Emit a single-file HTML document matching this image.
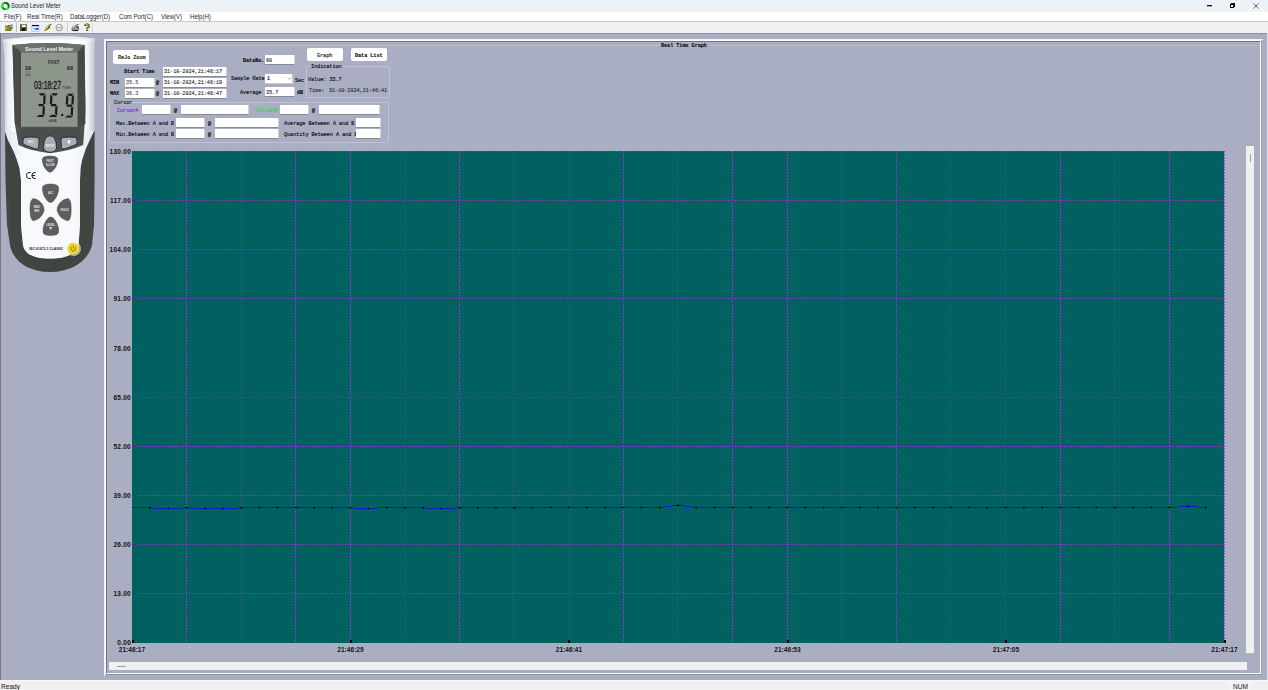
<!DOCTYPE html>
<html><head><meta charset="utf-8">
<style>
*{box-sizing:border-box}
html,body{margin:0;padding:0}
body{width:1268px;height:690px;overflow:hidden;position:relative;background:#aaaec3;font-family:"Liberation Sans",sans-serif;color:#000}
.a{position:absolute}
#title{left:0;top:0;width:1268px;height:12px;background:#ebf2f8}
#title .t{left:11px;top:2px;font-size:6.6px;line-height:8px;color:#262626;transform-origin:0 0;transform:scaleX(.9)}
#menu{left:0;top:12px;width:1268px;height:9px;background:#fff}
#menu span{position:absolute;top:-0.5px;font-size:6.9px;line-height:9px;color:#1c1c2c;transform-origin:0 0;transform:scaleX(.88)}
#tbline{left:0;top:21px;width:1268px;height:1px;background:#c8c8c8}
#toolbar{left:0;top:22px;width:1268px;height:11px;background:#f0f0f0}
#mdiTop{left:0;top:33px;width:1268px;height:1px;background:#8e92a4}
#mdiLeft{left:0;top:33px;width:1px;height:647px;background:#78797e}
#status{left:0;top:680px;width:1268px;height:10px;background:#f0f0f0;border-top:1px solid #f8f8f8}
.ui{font-family:"Liberation Mono",monospace;font-size:6px;line-height:7px;color:#0a0a0a;white-space:nowrap;transform-origin:0 0;transform:scaleX(.85);-webkit-text-stroke:0.15px currentColor}
.box{position:absolute;background:#fff;border-bottom:1px solid #888a98;border-right:1px solid #d0d2dc}
.btn{position:absolute;background:#fff;border-radius:2px}
.grp{position:absolute;border:1px solid #c0c4d3;border-radius:1.5px}
.yl{position:absolute;left:100px;width:31px;text-align:right;font-family:"Liberation Sans",sans-serif;font-weight:bold;font-size:6.5px;line-height:8px;color:#111;letter-spacing:.25px}
.xl{position:absolute;top:645.5px;width:31px;text-align:center;font-family:"Liberation Sans",sans-serif;font-weight:bold;font-size:6.5px;line-height:8px;color:#111;letter-spacing:.05px}
</style></head><body>
<!-- title bar -->
<div id="title" class="a">
  <svg class="a" style="left:1px;top:2px" width="9" height="8" viewBox="0 0 9 8"><circle cx="4.5" cy="4" r="3.3" fill="none" stroke="#1a7a2a" stroke-width="2"/><path d="M1.6 5.6 A3.3 3.3 0 0 1 3 1" fill="none" stroke="#2cf02c" stroke-width="2"/><path d="M4.5 7.3 A3.3 3.3 0 0 0 7.3 5.8" fill="none" stroke="#30ff30" stroke-width="2"/><path d="M5 1 L7.6 3.2" stroke="#0a5a1a" stroke-width="1.2"/><circle cx="4.6" cy="4" r="1.2" fill="#f4faf4"/></svg>
  <div class="a t">Sound Level Meter</div>
  <div class="a" style="left:1207px;top:5px;width:5px;height:1px;background:#111;box-shadow:0 0.5px 0 #555"></div>
  <div class="a" style="left:1230px;top:4px;width:4px;height:4px;border:1px solid #111"></div>
  <div class="a" style="left:1231px;top:3px;width:4px;height:4px;border-top:1px solid #111;border-right:1px solid #111"></div>
  <svg class="a" style="left:1253px;top:3px" width="6" height="6"><path d="M0.3 0.3 L5.7 5.7 M5.7 0.3 L0.3 5.7" stroke="#606060" stroke-width="0.9"/></svg>
</div>
<!-- menu -->
<div id="menu" class="a">
  <span style="left:4px">File(F)</span>
  <span style="left:27px">Real Time(R)</span>
  <span style="left:70px">DataLogger(D)</span>
  <span style="left:119px">Com Port(C)</span>
  <span style="left:161px">View(V)</span>
  <span style="left:190px">Help(H)</span>
</div>
<div id="tbline" class="a"></div>
<div id="toolbar" class="a"><svg class="a" style="left:0;top:0" width="100" height="11" viewBox="0 22 100 11">
<rect x="2" y="22" width="1" height="11" fill="#ffffff"/>
<!-- open folder -->
<path d="M5.5 26 L7.5 26 L8 25.5 L10 25.5 L10 27 L12.5 27 L11 30.5 L5.5 30.5 Z" fill="#8a8a10" stroke="#333" stroke-width="0.5"/>
<path d="M5.5 26.5 L7 28 L5.5 29.5 Z" fill="#f0f070"/>
<path d="M10.5 25 Q12.5 24.5 12.8 26" fill="none" stroke="#222" stroke-width="0.8"/>
<rect x="16" y="23" width="1" height="9" fill="#b8b8b8"/>
<rect x="17" y="23" width="0.5" height="9" fill="#fff"/>
<!-- save -->
<rect x="20.2" y="24.4" width="6.6" height="6.6" fill="#111"/>
<rect x="20.6" y="24.8" width="1" height="5.6" fill="#9a9a10"/>
<rect x="26" y="24.8" width="0.6" height="5.6" fill="#9a9a10"/>
<rect x="22" y="24.8" width="3.8" height="2.6" fill="#f4f4f4"/>
<rect x="25.2" y="29.6" width="0.8" height="0.8" fill="#fff"/>
<!-- window -->
<rect x="31.8" y="25" width="7.2" height="6.4" fill="#e8ecf4" stroke="#a8a8e0" stroke-width="0.5"/>
<rect x="32" y="25" width="7" height="1.2" fill="#000090"/>
<rect x="33.5" y="28" width="4" height="1.8" fill="#20e0e0"/>
<rect x="36" y="28" width="2.5" height="1.8" fill="#2040f0"/>
<!-- lightning -->
<path d="M49.5 24.2 L51 24.4 L48.6 27.2 L49.8 27.4 L45.5 30.2 L44.2 30.9 L46.6 28.2 L45.6 28 Z" fill="#f2f20c" stroke="#1a1a1a" stroke-width="0.35"/>
<path d="M51 24.4 L48.6 27.2 L49.8 27.4 L46 30" fill="none" stroke="#111" stroke-width="0.7"/>
<!-- circle -->
<circle cx="59.2" cy="27.6" r="3.1" fill="none" stroke="#a6a6a6" stroke-width="1.2"/>
<rect x="57" y="27.1" width="4.4" height="1.1" fill="#a6a6a6"/>
<rect x="67" y="23" width="1" height="9" fill="#cfcfcf"/>
<rect x="68" y="23" width="0.5" height="9" fill="#fff"/>
<!-- printer -->
<path d="M71.5 28 L73 25.2 L76.5 24.6 L78.6 26.5 L79 29.5 L77.6 30.8 L72 30.6 Z" fill="#9a9a9a"/>
<path d="M73.2 25.6 L74.6 25.2 L74.2 27 L73 27 Z" fill="#f0f0f0"/>
<rect x="77.2" y="24" width="1" height="1" fill="#111"/>
<path d="M76.4 26.6 Q78.6 26.8 78.4 28.6" fill="none" stroke="#111" stroke-width="1"/>
<path d="M71.6 29.6 L73.5 30.6 L77.8 30.6 L78.6 29.8" fill="none" stroke="#111" stroke-width="1"/>
<rect x="74" y="29" width="2.2" height="0.9" fill="#b0a020"/>
<!-- help -->
<path d="M84.6 25.8 Q85.4 24.2 87 24.3 Q88.9 24.5 88.9 26.1 Q88.8 27.3 87.3 28 L87.2 29" fill="none" stroke="#1a1a1a" stroke-width="1.8"/>
<path d="M84.6 25.8 Q85.4 24.2 87 24.3 Q88.9 24.5 88.9 26.1 Q88.8 27.3 87.3 28 L87.2 29" fill="none" stroke="#e8e810" stroke-width="0.8"/>
<rect x="86.3" y="29.6" width="1.8" height="1.4" fill="#1a1a1a"/>
<rect x="86.6" y="29.8" width="1" height="0.8" fill="#c8c810"/>
<rect x="92" y="23" width="1" height="10" fill="#d8d8d8"/>
<rect x="93" y="23" width="0.5" height="10" fill="#fff"/>
</svg>
</div>
<div id="mdiTop" class="a"></div>
<div id="mdiLeft" class="a"></div>

<!-- meter -->
<svg class="a" style="left:0;top:33px" width="100" height="245" viewBox="0 33 100 245">
<defs>
<linearGradient id="bodyg" x1="0" x2="1" y1="0" y2="0">
<stop offset="0" stop-color="#c4c8d4"/><stop offset="0.06" stop-color="#eceef4"/><stop offset="0.14" stop-color="#ffffff"/><stop offset="0.86" stop-color="#ffffff"/><stop offset="0.93" stop-color="#eef0f5"/><stop offset="1" stop-color="#c0c4d0"/>
</linearGradient>
<linearGradient id="topg" x1="0" x2="0" y1="0" y2="1">
<stop offset="0" stop-color="#d6d9e3"/><stop offset="1" stop-color="#ffffff" stop-opacity="0"/>
</linearGradient>
<linearGradient id="lowg" x1="0" x2="1" y1="0" y2="0">
<stop offset="0" stop-color="#e4e7ef"/><stop offset="0.2" stop-color="#f8f9fc"/><stop offset="0.8" stop-color="#f8f9fc"/><stop offset="1" stop-color="#e4e7ef"/>
</linearGradient>
</defs>
<!-- outer silhouette: white upper body -->
<path d="M2.5 39.6 Q48 33.2 94.8 38.4 L94.6 131 L5 132 L4.6 60 Z" fill="url(#bodyg)"/>
<path d="M2.5 39.6 Q48 33.2 94.8 38.4 L94.8 42 Q48 37 2.5 43 Z" fill="url(#topg)"/>
<!-- dark casing -->
<path d="M5 131 L8 140 L11 146 L14 152 L17 160 L19.5 168 L21 180 L21 225 L23 245 C25 255 35 258.5 50 258.5 C65 258.5 76 255 78.5 245 L80 225 L80 180 L80.5 168 L82 160 L86 148 L94 131 L94.6 131 L94.6 180 L94 225 L92 245 C89 258 75 272 50 272 C25 272 12 258 10 245 L7 225 L5.5 180 Z" fill="#3f4541"/>
<path d="M8.5 200 L9 228 Q12 258 35 268" fill="none" stroke="#50574f" stroke-width="1" opacity="0.5"/>
<path d="M92 200 L91.5 228 Q88 258 65 268" fill="none" stroke="#50574f" stroke-width="1" opacity="0.5"/>
<!-- white lower body -->
<path d="M5 131 L94 131 L86 148 L82 160 L80.5 168 L80 180 L80 225 L78.5 245 C76 255 65 258.5 50 258.5 C35 258.5 25 255 23 245 L21 225 L21 180 L19.5 168 L17 160 L14 152 L11 146 L8 140 Z" fill="url(#lowg)"/>
<!-- bezel -->
<path d="M12.5 45 Q48.5 41.2 84.5 45 L85.6 110 L83.2 145 Q70 151 50 153.2 Q30 151 18.5 145 L14.5 122 Z" fill="#4e5350"/>
<path d="M12.5 45 Q48.5 41.2 84.5 45 L77.5 52.5 L21 52.5 Z" fill="#6c6f6d"/>
<path d="M12.5 45 L21 52.5 L21 127.5 L15 124 Z" fill="#474b49"/>
<path d="M84.5 45 L77.5 52.5 L77.5 127.5 L85.4 124 Z" fill="#444846"/>
<path d="M21 127.5 L77.5 127.5 L83.5 140 L18 140 Z" fill="#4a4e4c"/>
<text x="49" y="50.9" font-family="Liberation Sans" font-weight="bold" font-size="5.4" fill="#f4f4f4" text-anchor="middle" textLength="48" lengthAdjust="spacingAndGlyphs">Sound Level Meter</text>
<!-- lcd -->
<rect x="21" y="52.5" width="56.5" height="75" fill="#8d968b"/>
<rect x="21" y="126.8" width="56.5" height="0.8" fill="#3c403d"/>
<text x="53.7" y="64.2" font-family="Liberation Sans" font-weight="bold" font-size="4.6" fill="#2a2c28" text-anchor="middle" textLength="11.5" lengthAdjust="spacingAndGlyphs">FAST</text>
<text x="24.8" y="70" font-family="Liberation Mono" font-weight="bold" font-size="6" fill="#1c1e1a" textLength="6.4" lengthAdjust="spacingAndGlyphs">30</text>
<text x="66.8" y="70" font-family="Liberation Mono" font-weight="bold" font-size="6" fill="#1c1e1a" textLength="6.4" lengthAdjust="spacingAndGlyphs">80</text>
<rect x="25.2" y="71" width="5.6" height="2.6" fill="#7f887d"/><rect x="25.2" y="73.8" width="5.6" height="2.6" fill="#6e766d"/>
<text x="34" y="89.2" font-family="Liberation Sans" font-size="11" fill="#151515" stroke="#151515" stroke-width="0.3" textLength="27" lengthAdjust="spacingAndGlyphs">03:18:27</text>
<text x="62" y="89" font-family="Liberation Sans" font-size="4.2" fill="#333" textLength="9" lengthAdjust="spacingAndGlyphs">TIME</text>
<g fill="#1a1a1a"><path d="M38.99 93.30 L45.39 93.30 L43.58 95.50 L40.38 95.50 Z"/><path d="M45.74 94.30 L45.25 104.25 L43.08 103.55 L43.43 96.50 Z"/><path d="M38.86 104.05 L43.45 104.05 L44.00 105.15 L43.34 106.25 L38.75 106.25 L38.20 105.15 Z"/><path d="M44.95 106.05 L44.46 116.00 L42.37 113.80 L42.72 106.75 Z"/><path d="M39.42 114.80 L42.62 114.80 L44.21 117.00 L36.41 117.00 Z"/><path d="M51.39 93.30 L57.99 93.30 L56.18 95.50 L52.78 95.50 Z"/><path d="M50.34 94.30 L52.43 96.50 L52.08 103.55 L49.85 104.25 Z"/><path d="M51.26 104.05 L56.05 104.05 L56.60 105.15 L55.95 106.25 L51.15 106.25 L50.60 105.15 Z"/><path d="M57.55 106.05 L57.06 116.00 L54.97 113.80 L55.32 106.75 Z"/><path d="M51.82 114.80 L55.22 114.80 L56.81 117.00 L48.81 117.00 Z"/><path d="M67.30 93.80 L73.69 93.80 L71.88 96.00 L68.69 96.00 Z"/><path d="M74.05 94.80 L73.55 104.80 L71.38 104.10 L71.73 97.00 Z"/><path d="M66.25 94.80 L68.34 97.00 L67.98 104.10 L65.75 104.80 Z"/><path d="M67.16 104.60 L71.75 104.60 L72.30 105.70 L71.65 106.80 L67.04 106.80 L66.50 105.70 Z"/><path d="M73.25 106.60 L72.75 116.60 L70.66 114.40 L71.02 107.30 Z"/><path d="M67.72 115.40 L70.91 115.40 L72.50 117.60 L64.70 117.60 Z"/></g>
<rect x="61.2" y="114" width="2" height="2" fill="#111"/>
<text x="52.6" y="122.2" font-family="Liberation Sans" font-size="3.4" fill="#333" text-anchor="middle" textLength="8.6" lengthAdjust="spacingAndGlyphs">dBA</text>
<!-- top buttons -->
<path d="M24 137.5 Q31 136.5 37 137.5 Q39.5 138 39 141 L38.5 147.5 Q37.5 149.5 35 148.8 L25 145 Q22.5 144 22.8 141.5 Z" fill="#a6aeb6" stroke="#1f1f1f" stroke-width="0.8"/>
<path d="M76 137.5 Q69 136.5 63 137.5 Q60.5 138 61 141 L61.5 147.5 Q62.5 149.5 65 148.8 L75 145 Q77.5 144 77.2 141.5 Z" fill="#a6aeb6" stroke="#1f1f1f" stroke-width="0.8"/>
<path d="M43.5 147 Q44 136 50 135.8 Q56 136 56.6 147 Q56.5 152 50 152.2 Q43.5 152 43.5 147 Z" fill="#a6aeb6" stroke="#1f1f1f" stroke-width="0.8"/>
<text x="31" y="143.4" font-family="Liberation Sans" font-weight="bold" font-size="2.8" fill="#eef0f2" text-anchor="middle">REC</text>
<text x="50" y="146.6" font-family="Liberation Sans" font-weight="bold" font-size="2.7" fill="#eef0f2" text-anchor="middle">SETUP</text>
<path d="M67.5 140.5 Q69 139.5 70.5 140.5 L69.8 143.5 L68.2 143.5 Z" fill="#f4f4f4"/>
<!-- fast/slow -->
<path d="M42.4 159 Q42.8 156.2 50 156 Q57.2 156.2 57.8 159 Q58 166 52 171.5 Q50 172.8 48 171.5 Q42 166 42.4 159 Z" fill="#5d5f5e" stroke="#3b3836" stroke-width="0.5"/>
<text x="50.2" y="162.4" font-family="Liberation Sans" font-weight="bold" font-size="2.9" fill="#dfe1e3" text-anchor="middle">FAST</text>
<text x="50.2" y="166.4" font-family="Liberation Sans" font-weight="bold" font-size="2.9" fill="#dfe1e3" text-anchor="middle">SLOW</text>
<!-- CE -->
<path d="M30.8 172.5 Q26.5 172 26.5 175.5 Q26.5 179 30.8 178.6" fill="none" stroke="#1c1c1c" stroke-width="1"/>
<path d="M35.8 172.5 Q31.8 172 31.8 175.5 Q31.8 179 35.8 178.6 M32 175.5 L35 175.5" fill="none" stroke="#1c1c1c" stroke-width="1"/>
<!-- cross buttons -->
<g fill="#5d5f5e" stroke="#4a3a30" stroke-width="0.45">
<path d="M42.5 187.5 Q43 184 50.5 184 Q58 184 58.6 187.5 Q59 195 53 201.5 Q50.5 203.5 48 201.5 Q42 195 42.5 187.5 Z"/>
<path d="M43 232 Q43.3 235.5 50.7 235.5 Q58 235.5 58.7 232 Q59 224 53 217.8 Q50.7 216 48.4 217.8 Q42.6 224 43 232 Z"/>
<path d="M33.5 198.5 Q30 199 30 209.5 Q30 220 33.5 220.8 Q41 219 43.6 212 Q44.6 209.5 43.6 207 Q41 200 33.5 198.5 Z"/>
<path d="M67.8 198.5 Q71.2 199 71.2 209.5 Q71.2 220 67.8 220.8 Q60 219 57.6 212 Q56.6 209.5 57.6 207 Q60 200 67.8 198.5 Z"/>
</g>
<g font-family="Liberation Sans" font-weight="bold" fill="#e6e8ea" text-anchor="middle">
<text x="50.6" y="194.2" font-size="3">A/C</text>
<text x="36.8" y="208.4" font-size="2.7">MAX</text>
<text x="36.8" y="212.4" font-size="2.7">MIN</text>
<text x="64.5" y="210.7" font-size="2.9">HOLD</text>
<text x="50.7" y="225.6" font-size="2.7">LEVEL</text>
</g>
<path d="M49 227.2 L52.4 227.2 L50.7 229.8 Z" fill="#eef0f2"/>
<text x="46" y="250.2" font-family="Liberation Sans" font-weight="bold" font-size="3.6" fill="#262626" text-anchor="middle" textLength="33.5" lengthAdjust="spacingAndGlyphs">IEC 61672-1 CLASS2</text>
<!-- power -->
<circle cx="73.8" cy="249" r="7.2" fill="#ffffff" opacity="0.85"/>
<circle cx="75" cy="250.5" r="6.5" fill="#3a3530" opacity="0.35"/>
<circle cx="73.2" cy="248.6" r="6" fill="#f3e03a"/>
<circle cx="73.2" cy="248.6" r="5" fill="#f0d62a"/>
<path d="M71.3 246.6 Q70.6 247.6 70.9 249 Q71.5 251.1 73.2 251.2 Q74.9 251.1 75.5 249 Q75.8 247.6 75.1 246.6" fill="none" stroke="#8a5a18" stroke-width="0.8"/>
<path d="M73.2 245.6 L73.2 248.4" stroke="#8a5a18" stroke-width="0.8"/>
</svg>

<!-- child window frame -->
<div class="a" style="left:104px;top:39px;width:1159px;height:637px;border-top:1px solid #f4f4f8;border-left:1px solid #f4f4f8"></div>
<div class="a" style="left:1267px;top:33px;width:1px;height:647px;background:#e2e3e8"></div>
<div class="a" style="left:105px;top:40px;width:1157px;height:635px;border-top:1px solid #fdfdff;border-left:1px solid #fdfdff;border-right:1px solid #a2a2aa;border-bottom:1px solid #8e909c"></div>
<div class="a" style="left:106px;top:41px;width:1155px;height:633px;border-top:1px solid #6e707c;border-left:1px solid #6e707c;border-right:1px solid #fafafc;border-bottom:1px solid #fafafc"></div>
<div class="a" style="left:107px;top:45px;width:1153px;height:1px;background:#b8bccd"></div>

<div class="a ui" style="left:661px;top:42px;font-weight:bold">Real Time Graph</div>

<!-- controls -->
<div class="btn" style="left:113px;top:50px;width:36px;height:14px"></div>
<div class="a ui" style="left:118px;top:54px">ReJo Zoom</div>

<div class="a ui" style="left:124px;top:68px;font-weight:bold">Start Time</div>
<div class="box" style="left:163px;top:67px;width:64px;height:10px"></div>
<div class="a ui" style="left:164px;top:68px;color:#333">31-10-2024,21:46:17</div>

<div class="a ui" style="left:110px;top:79px;font-weight:bold">MIN</div>
<div class="box" style="left:125px;top:78px;width:30px;height:10px"></div>
<div class="a ui" style="left:126px;top:79px;color:#555">35.5</div>
<div class="a ui" style="left:156px;top:79px">@</div>
<div class="box" style="left:163px;top:78px;width:64px;height:10px"></div>
<div class="a ui" style="left:164px;top:79px;color:#333">31-10-2024,21:46:19</div>

<div class="a ui" style="left:110px;top:90px;font-weight:bold">MAX</div>
<div class="box" style="left:125px;top:89px;width:30px;height:10px"></div>
<div class="a ui" style="left:126px;top:90px;color:#555">36.3</div>
<div class="a ui" style="left:156px;top:90px">@</div>
<div class="box" style="left:163px;top:89px;width:64px;height:10px"></div>
<div class="a ui" style="left:164px;top:90px;color:#333">31-10-2024,21:46:47</div>

<div class="a ui" style="left:243px;top:57px;font-weight:bold">DataNo.</div>
<div class="box" style="left:265px;top:55px;width:30px;height:10px"></div>
<div class="a ui" style="left:266px;top:57px;color:#333">60</div>

<div class="a ui" style="left:231px;top:75px">Sample Rate</div>
<div class="box" style="left:265px;top:74px;width:28px;height:10px;border-bottom-color:#ccc"></div>
<div class="a ui" style="left:267px;top:75px">1</div>
<svg class="a" style="left:287px;top:77px" width="5" height="4"><path d="M0.5 0.5 L2.5 2.5 L4.5 0.5" fill="none" stroke="#999" stroke-width="0.7"/></svg>
<div class="a ui" style="left:295px;top:77px">Sec</div>

<div class="a ui" style="left:240px;top:89px">Average</div>
<div class="box" style="left:265px;top:87px;width:30px;height:10px"></div>
<div class="a ui" style="left:266px;top:89px;color:#333">35.7</div>
<div class="a ui" style="left:297px;top:89px;font-weight:bold">dB</div>

<div class="btn" style="left:307px;top:48px;width:36px;height:13px"></div>
<div class="a ui" style="left:317px;top:52px">Graph</div>
<div class="btn" style="left:351px;top:48px;width:36px;height:13px"></div>
<div class="a ui" style="left:355px;top:52px;font-weight:bold">Data List</div>

<div class="grp" style="left:306px;top:66px;width:84px;height:32px"></div>
<div class="a" style="left:310px;top:63px;width:33px;height:6px;background:#aaaec3"></div>
<div class="a ui" style="left:311px;top:63px">Indication</div>
<div class="a ui" style="left:308px;top:75.5px">Value: 35.7</div>
<div class="a ui" style="left:309px;top:86.5px;color:#333">Time:</div>
<div class="a ui" style="left:329px;top:86.5px;color:#333">31-10-2024,21:46:41</div>

<div class="grp" style="left:109px;top:102px;width:280px;height:41px"></div>
<div class="a" style="left:113px;top:99px;width:19px;height:6px;background:#aaaec3"></div>
<div class="a ui" style="left:114px;top:99px;color:#222">Cursor</div>

<div class="a ui" style="left:117px;top:107px;color:#7a2ad8">CursorA</div>
<div class="box" style="left:142px;top:105px;width:29px;height:10px"></div>
<div class="a ui" style="left:174px;top:107px">@</div>
<div class="box" style="left:181px;top:105px;width:68px;height:10px"></div>
<div class="a ui" style="left:256px;top:107px;color:#22e022">CursorB</div>
<div class="box" style="left:280px;top:105px;width:29px;height:10px"></div>
<div class="a ui" style="left:312px;top:107px">@</div>
<div class="box" style="left:319px;top:105px;width:61px;height:10px"></div>

<div class="a ui" style="left:116px;top:120px">Max.Between A and B</div>
<div class="box" style="left:176px;top:118px;width:29px;height:10px"></div>
<div class="a ui" style="left:208px;top:120px">@</div>
<div class="box" style="left:215px;top:118px;width:64px;height:10px"></div>
<div class="a ui" style="left:284px;top:120px">Average Between A and B</div>
<div class="box" style="left:356px;top:118px;width:25px;height:10px"></div>

<div class="a ui" style="left:116px;top:131px">Min.Between A and B</div>
<div class="box" style="left:176px;top:129px;width:29px;height:10px"></div>
<div class="a ui" style="left:208px;top:131px">@</div>
<div class="box" style="left:215px;top:129px;width:64px;height:10px"></div>
<div class="a ui" style="left:284px;top:131px">Quantity Between A and B</div>
<div class="box" style="left:356px;top:129px;width:25px;height:10px"></div>

<!-- plot -->
<svg width="1268" height="690" style="position:absolute;left:0;top:0" shape-rendering="crispEdges">
<rect x="132.0" y="151.0" width="1092.0" height="491.5" fill="#016161"/>
<line x1="186.5" y1="151" x2="186.5" y2="642.5" stroke="#cc1cf0" stroke-width="1" stroke-dasharray="1.6 1.4" shape-rendering="auto"/>
<line x1="241.5" y1="151" x2="241.5" y2="642.5" stroke="#3d5586" stroke-width="1" stroke-dasharray="1.6 1.4" shape-rendering="auto"/>
<line x1="295.5" y1="151" x2="295.5" y2="642.5" stroke="#cc1cf0" stroke-width="1" stroke-dasharray="1.6 1.4" shape-rendering="auto"/>
<line x1="350.5" y1="151" x2="350.5" y2="642.5" stroke="#cc1cf0" stroke-width="1" stroke-dasharray="1.6 1.4" shape-rendering="auto"/>
<line x1="405.5" y1="151" x2="405.5" y2="642.5" stroke="#3d5586" stroke-width="1" stroke-dasharray="1.6 1.4" shape-rendering="auto"/>
<line x1="459.5" y1="151" x2="459.5" y2="642.5" stroke="#cc1cf0" stroke-width="1" stroke-dasharray="1.6 1.4" shape-rendering="auto"/>
<line x1="513.5" y1="151" x2="513.5" y2="642.5" stroke="#3d5586" stroke-width="1" stroke-dasharray="1.6 1.4" shape-rendering="auto"/>
<line x1="569.5" y1="151" x2="569.5" y2="642.5" stroke="#3d5586" stroke-width="1" stroke-dasharray="1.6 1.4" shape-rendering="auto"/>
<line x1="623.5" y1="151" x2="623.5" y2="642.5" stroke="#cc1cf0" stroke-width="1" stroke-dasharray="1.6 1.4" shape-rendering="auto"/>
<line x1="677.5" y1="151" x2="677.5" y2="642.5" stroke="#3d5586" stroke-width="1" stroke-dasharray="1.6 1.4" shape-rendering="auto"/>
<line x1="732.5" y1="151" x2="732.5" y2="642.5" stroke="#cc1cf0" stroke-width="1" stroke-dasharray="1.6 1.4" shape-rendering="auto"/>
<line x1="787.5" y1="151" x2="787.5" y2="642.5" stroke="#cc1cf0" stroke-width="1" stroke-dasharray="1.6 1.4" shape-rendering="auto"/>
<line x1="841.5" y1="151" x2="841.5" y2="642.5" stroke="#3d5586" stroke-width="1" stroke-dasharray="1.6 1.4" shape-rendering="auto"/>
<line x1="896.5" y1="151" x2="896.5" y2="642.5" stroke="#a42ad8" stroke-width="1" stroke-dasharray="1.6 1.4" shape-rendering="auto"/>
<line x1="951.5" y1="151" x2="951.5" y2="642.5" stroke="#0f5e68" stroke-width="1" stroke-dasharray="1.6 1.4" shape-rendering="auto"/>
<line x1="1005.5" y1="151" x2="1005.5" y2="642.5" stroke="#3d5586" stroke-width="1" stroke-dasharray="1.6 1.4" shape-rendering="auto"/>
<line x1="1060.5" y1="151" x2="1060.5" y2="642.5" stroke="#cc1cf0" stroke-width="1" stroke-dasharray="1.6 1.4" shape-rendering="auto"/>
<line x1="1114.5" y1="151" x2="1114.5" y2="642.5" stroke="#3d5586" stroke-width="1" stroke-dasharray="1.6 1.4" shape-rendering="auto"/>
<line x1="1169.5" y1="151" x2="1169.5" y2="642.5" stroke="#cc1cf0" stroke-width="1" stroke-dasharray="1.6 1.4" shape-rendering="auto"/>
<line x1="1224.5" y1="151" x2="1224.5" y2="642.5" stroke="#cc1cf0" stroke-width="1" stroke-dasharray="1.6 1.4" shape-rendering="auto"/>
<line x1="133" y1="151.5" x2="1224.0" y2="151.5" stroke="#5e4a9c" stroke-width="1" stroke-dasharray="1 2"/>
<line x1="137.6" y1="200.5" x2="1224.0" y2="200.5" stroke="#9a30cc" stroke-width="1" stroke-dasharray="1.5 1.5" shape-rendering="auto"/>
<line x1="132.0" y1="200.5" x2="136.0" y2="200.5" stroke="#6a1a90" stroke-width="1"/>
<line x1="137.6" y1="249.5" x2="1224.0" y2="249.5" stroke="#9a30cc" stroke-width="1" stroke-dasharray="1.5 1.5" shape-rendering="auto"/>
<line x1="132.0" y1="249.5" x2="136.0" y2="249.5" stroke="#6a1a90" stroke-width="1"/>
<line x1="137.6" y1="298.5" x2="1224.0" y2="298.5" stroke="#9a30cc" stroke-width="1" stroke-dasharray="1.5 1.5" shape-rendering="auto"/>
<line x1="132.0" y1="298.5" x2="136.0" y2="298.5" stroke="#6a1a90" stroke-width="1"/>
<line x1="132.0" y1="347.5" x2="136.0" y2="347.5" stroke="#6a1a90" stroke-width="1"/>
<line x1="137.6" y1="397.5" x2="1224.0" y2="397.5" stroke="#3d5586" stroke-width="1" stroke-dasharray="1.5 1.5" shape-rendering="auto"/>
<line x1="132.0" y1="397.5" x2="136.0" y2="397.5" stroke="#6a1a90" stroke-width="1"/>
<line x1="137.6" y1="446.5" x2="1224.0" y2="446.5" stroke="#c41cf0" stroke-width="1" stroke-dasharray="1.5 1.5" shape-rendering="auto"/>
<line x1="132.0" y1="446.5" x2="136.0" y2="446.5" stroke="#6a1a90" stroke-width="1"/>
<line x1="137.6" y1="495.5" x2="1224.0" y2="495.5" stroke="#c41cf0" stroke-width="1" stroke-dasharray="1.5 1.5" shape-rendering="auto"/>
<line x1="132.0" y1="495.5" x2="136.0" y2="495.5" stroke="#6a1a90" stroke-width="1"/>
<line x1="137.6" y1="544.5" x2="1224.0" y2="544.5" stroke="#9a30cc" stroke-width="1" stroke-dasharray="1.5 1.5" shape-rendering="auto"/>
<line x1="132.0" y1="544.5" x2="136.0" y2="544.5" stroke="#6a1a90" stroke-width="1"/>
<line x1="137.6" y1="593.5" x2="1224.0" y2="593.5" stroke="#9a30cc" stroke-width="1" stroke-dasharray="1.5 1.5" shape-rendering="auto"/>
<line x1="132.0" y1="593.5" x2="136.0" y2="593.5" stroke="#6a1a90" stroke-width="1"/>
<rect x="132" y="640" width="1.6" height="2.6" fill="#000"/>
<rect x="350" y="640" width="1.6" height="2.6" fill="#000"/>
<rect x="568" y="640" width="1.6" height="2.6" fill="#000"/>
<rect x="787" y="640" width="1.6" height="2.6" fill="#000"/>
<rect x="1005" y="640" width="1.6" height="2.6" fill="#000"/>
<rect x="1224" y="640" width="1.6" height="2.6" fill="#000"/>
</svg>
<svg width="1268" height="690" style="position:absolute;left:0;top:0">
<polyline points="132.0,507.5 150.2,507.9 168.4,508.5 186.6,507.9 204.8,508.5 223.0,508.5 241.2,507.9 259.4,507.5 277.6,507.5 295.8,507.5 314.0,507.9 332.2,507.9 350.4,507.9 368.6,508.5 386.8,507.5 405.0,507.9 423.2,507.9 441.4,508.5 459.6,507.9 477.8,507.9 496.0,507.9 514.2,507.9 532.4,507.9 550.6,507.5 568.8,507.5 587.0,507.5 605.2,507.5 623.4,507.5 641.6,507.5 659.8,507.5 678.0,505.3 696.2,507.5 714.4,507.5 732.6,507.5 750.8,507.5 769.0,507.5 787.2,507.5 805.4,507.5 823.6,507.5 841.8,507.5 860.0,507.5 878.2,507.5 896.4,507.5 914.6,507.5 932.8,507.5 951.0,507.5 969.2,507.5 987.4,507.9 1005.6,507.5 1023.8,507.5 1042.0,507.5 1060.2,507.5 1078.4,507.5 1096.6,507.5 1114.8,507.5 1133.0,507.5 1151.2,507.5 1169.4,507.5 1187.6,506.4 1205.8,507.5" fill="none" stroke="#0a1cc8" stroke-width="1" shape-rendering="crispEdges"/>
<rect x="149.4" y="507.1" width="1.6" height="1.6" fill="#000"/>
<rect x="167.6" y="507.7" width="1.6" height="1.6" fill="#000"/>
<rect x="185.8" y="507.1" width="1.6" height="1.6" fill="#000"/>
<rect x="204.0" y="507.7" width="1.6" height="1.6" fill="#000"/>
<rect x="222.2" y="507.7" width="1.6" height="1.6" fill="#000"/>
<rect x="240.4" y="507.1" width="1.6" height="1.6" fill="#000"/>
<rect x="258.6" y="506.7" width="1.6" height="1.6" fill="#000"/>
<rect x="276.8" y="506.7" width="1.6" height="1.6" fill="#000"/>
<rect x="295.0" y="506.7" width="1.6" height="1.6" fill="#000"/>
<rect x="313.2" y="507.1" width="1.6" height="1.6" fill="#000"/>
<rect x="331.4" y="507.1" width="1.6" height="1.6" fill="#000"/>
<rect x="349.6" y="507.1" width="1.6" height="1.6" fill="#000"/>
<rect x="367.8" y="507.7" width="1.6" height="1.6" fill="#000"/>
<rect x="386.0" y="506.7" width="1.6" height="1.6" fill="#000"/>
<rect x="404.2" y="507.1" width="1.6" height="1.6" fill="#000"/>
<rect x="422.4" y="507.1" width="1.6" height="1.6" fill="#000"/>
<rect x="440.6" y="507.7" width="1.6" height="1.6" fill="#000"/>
<rect x="458.8" y="507.1" width="1.6" height="1.6" fill="#000"/>
<rect x="477.0" y="507.1" width="1.6" height="1.6" fill="#000"/>
<rect x="495.2" y="507.1" width="1.6" height="1.6" fill="#000"/>
<rect x="513.4" y="507.1" width="1.6" height="1.6" fill="#000"/>
<rect x="531.6" y="507.1" width="1.6" height="1.6" fill="#000"/>
<rect x="549.8" y="506.7" width="1.6" height="1.6" fill="#000"/>
<rect x="568.0" y="506.7" width="1.6" height="1.6" fill="#000"/>
<rect x="586.2" y="506.7" width="1.6" height="1.6" fill="#000"/>
<rect x="604.4" y="506.7" width="1.6" height="1.6" fill="#000"/>
<rect x="622.6" y="506.7" width="1.6" height="1.6" fill="#000"/>
<rect x="640.8" y="506.7" width="1.6" height="1.6" fill="#000"/>
<rect x="659.0" y="506.7" width="1.6" height="1.6" fill="#000"/>
<rect x="677.2" y="504.5" width="1.6" height="1.6" fill="#000"/>
<rect x="695.4" y="506.7" width="1.6" height="1.6" fill="#000"/>
<rect x="713.6" y="506.7" width="1.6" height="1.6" fill="#000"/>
<rect x="731.8" y="506.7" width="1.6" height="1.6" fill="#000"/>
<rect x="750.0" y="506.7" width="1.6" height="1.6" fill="#000"/>
<rect x="768.2" y="506.7" width="1.6" height="1.6" fill="#000"/>
<rect x="786.4" y="506.7" width="1.6" height="1.6" fill="#000"/>
<rect x="804.6" y="506.7" width="1.6" height="1.6" fill="#000"/>
<rect x="822.8" y="506.7" width="1.6" height="1.6" fill="#000"/>
<rect x="841.0" y="506.7" width="1.6" height="1.6" fill="#000"/>
<rect x="859.2" y="506.7" width="1.6" height="1.6" fill="#000"/>
<rect x="877.4" y="506.7" width="1.6" height="1.6" fill="#000"/>
<rect x="895.6" y="506.7" width="1.6" height="1.6" fill="#000"/>
<rect x="913.8" y="506.7" width="1.6" height="1.6" fill="#000"/>
<rect x="932.0" y="506.7" width="1.6" height="1.6" fill="#000"/>
<rect x="950.2" y="506.7" width="1.6" height="1.6" fill="#000"/>
<rect x="968.4" y="506.7" width="1.6" height="1.6" fill="#000"/>
<rect x="986.6" y="507.1" width="1.6" height="1.6" fill="#000"/>
<rect x="1004.8" y="506.7" width="1.6" height="1.6" fill="#000"/>
<rect x="1023.0" y="506.7" width="1.6" height="1.6" fill="#000"/>
<rect x="1041.2" y="506.7" width="1.6" height="1.6" fill="#000"/>
<rect x="1059.4" y="506.7" width="1.6" height="1.6" fill="#000"/>
<rect x="1077.6" y="506.7" width="1.6" height="1.6" fill="#000"/>
<rect x="1095.8" y="506.7" width="1.6" height="1.6" fill="#000"/>
<rect x="1114.0" y="506.7" width="1.6" height="1.6" fill="#000"/>
<rect x="1132.2" y="506.7" width="1.6" height="1.6" fill="#000"/>
<rect x="1150.4" y="506.7" width="1.6" height="1.6" fill="#000"/>
<rect x="1168.6" y="506.7" width="1.6" height="1.6" fill="#000"/>
<rect x="1186.8" y="505.6" width="1.6" height="1.6" fill="#000"/>
<rect x="1205.0" y="506.7" width="1.6" height="1.6" fill="#000"/>
</svg>
<div class="yl" style="top:148.0px">130.00</div>
<div class="yl" style="top:197.1px">117.00</div>
<div class="yl" style="top:246.3px">104.00</div>
<div class="yl" style="top:295.4px">91.00</div>
<div class="yl" style="top:344.5px">78.00</div>
<div class="yl" style="top:393.6px">65.00</div>
<div class="yl" style="top:442.8px">52.00</div>
<div class="yl" style="top:491.9px">39.00</div>
<div class="yl" style="top:541.0px">26.00</div>
<div class="yl" style="top:590.2px">13.00</div>
<div class="yl" style="top:639.3px">0.00</div>

<div class="xl" style="left:116.5px">21:46:17</div>
<div class="xl" style="left:335.0px">21:46:29</div>
<div class="xl" style="left:553.5px">21:46:41</div>
<div class="xl" style="left:772.0px">21:46:53</div>
<div class="xl" style="left:990.5px">21:47:05</div>
<div class="xl" style="left:1209.0px">21:47:17</div>


<!-- scrollbars -->
<div class="a" style="left:1246px;top:146px;width:8px;height:507px;background:#f0f0f0"></div>
<div class="a" style="left:1250px;top:154px;width:1px;height:8px;background:#a0a0a0"></div>
<div class="a" style="left:109px;top:662px;width:1138px;height:8px;background:#f0f0f0"></div>
<div class="a" style="left:117px;top:666px;width:9px;height:1px;background:#a0a0a0"></div>

<!-- status -->
<div id="status" class="a">
  <div class="a" style="left:1px;top:1.5px;font-size:6.6px;line-height:8px;color:#111">Ready</div>
  <div class="a" style="left:1230px;top:1px;width:20px;height:9px;border-left:1px solid #fbfbfb;border-right:1px solid #fbfbfb"></div>
  <div class="a" style="left:1233px;top:2px;font-size:6.6px;line-height:8px;color:#1a1a2a">NUM</div>
</div>
</body></html>
